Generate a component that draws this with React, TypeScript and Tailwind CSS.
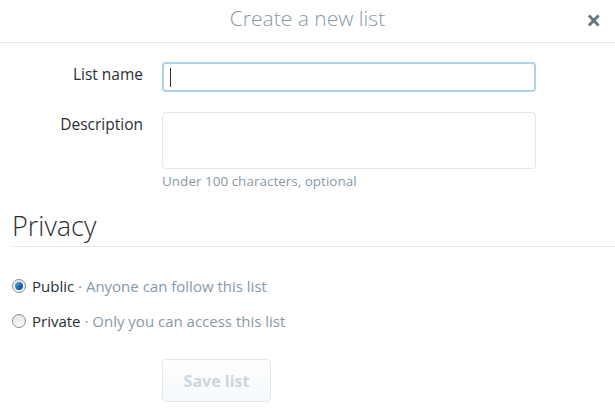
import React, { useState } from "react";

function Radio({ checked }: { checked: boolean }) {
  return (
    <span className="relative inline-flex h-[14px] w-[14px] shrink-0 items-center justify-center rounded-full border border-[#8a8a8a] bg-gradient-to-b from-[#e6e6e6] to-[#fafafa]">
      {checked && (
        <span className="h-[8px] w-[8px] rounded-full bg-gradient-to-br from-[#6ab4ea] via-[#1f6fb8] to-[#0b3f78]" />
      )}
    </span>
  );
}

export default function App() {
  const [privacy, setPrivacy] = useState<"public" | "private">("public");

  return (
    <div className="h-[416px] w-[615px] overflow-hidden bg-white font-['Open_Sans',sans-serif] text-[#292f33]">
      {/* header */}
      <div className="relative flex h-[43px] items-center justify-center border-b border-[#e1e8ed]">
        <h3 className="-mt-[4px] text-[21px] font-light text-[#8899a6]">
          Create a new list
        </h3>
        <button className="absolute right-[14px] top-[7px] text-[26px] font-bold leading-none text-[#66757f]">
          ×
        </button>
      </div>

      {/* form */}
      <div className="pt-[19px]">
        <div className="grid grid-cols-[143px_374px] gap-x-[19px]">
          <label className="text-right text-[15.5px] leading-[24px]">
            List name
          </label>
          <div className="h-[30px] rounded-[4px] border-2 border-[#a8d6e8] bg-white px-[6px] py-[4px]">
            <div className="h-[19px] w-[1px] bg-[#292f33]" />
          </div>

          <label className="mt-[20px] text-right text-[15.5px] leading-[24px]">
            Description
          </label>
          <div className="mt-[20px]">
            <div className="h-[57px] rounded-[4px] border border-[#e1e8ed] bg-white" />
            <p className="mt-[3px] text-[13.5px] leading-[18px] text-[#8899a6]">
              Under 100 characters, optional
            </p>
          </div>
        </div>

        {/* privacy */}
        <div className="ml-[12px] mt-[20px] border-b border-[#e1e8ed] pb-[4px]">
          <h2 className="text-[27px] font-light leading-[32px]">Privacy</h2>
        </div>

        <div className="ml-[12px] mt-[30px] flex flex-col gap-[17px] text-[15px] leading-[18px]">
          <label
            className="flex items-center gap-[6px]"
            onClick={() => setPrivacy("public")}
          >
            <Radio checked={privacy === "public"} />
            <span>
              Public <span className="text-[#8899a6]">· Anyone can follow this list</span>
            </span>
          </label>
          <label
            className="flex items-center gap-[6px]"
            onClick={() => setPrivacy("private")}
          >
            <Radio checked={privacy === "private"} />
            <span>
              Private <span className="text-[#8899a6]">· Only you can access this list</span>
            </span>
          </label>
        </div>

        <div className="ml-[162px] mt-[29px]">
          <button
            disabled
            className="h-[43px] w-[109px] rounded-[4px] border border-[#e1e8ed] bg-gradient-to-b from-white to-[#f5f8fa] text-[16px] font-bold text-[#ccd6dd]"
          >
            Save list
          </button>
        </div>
      </div>
    </div>
  );
}
